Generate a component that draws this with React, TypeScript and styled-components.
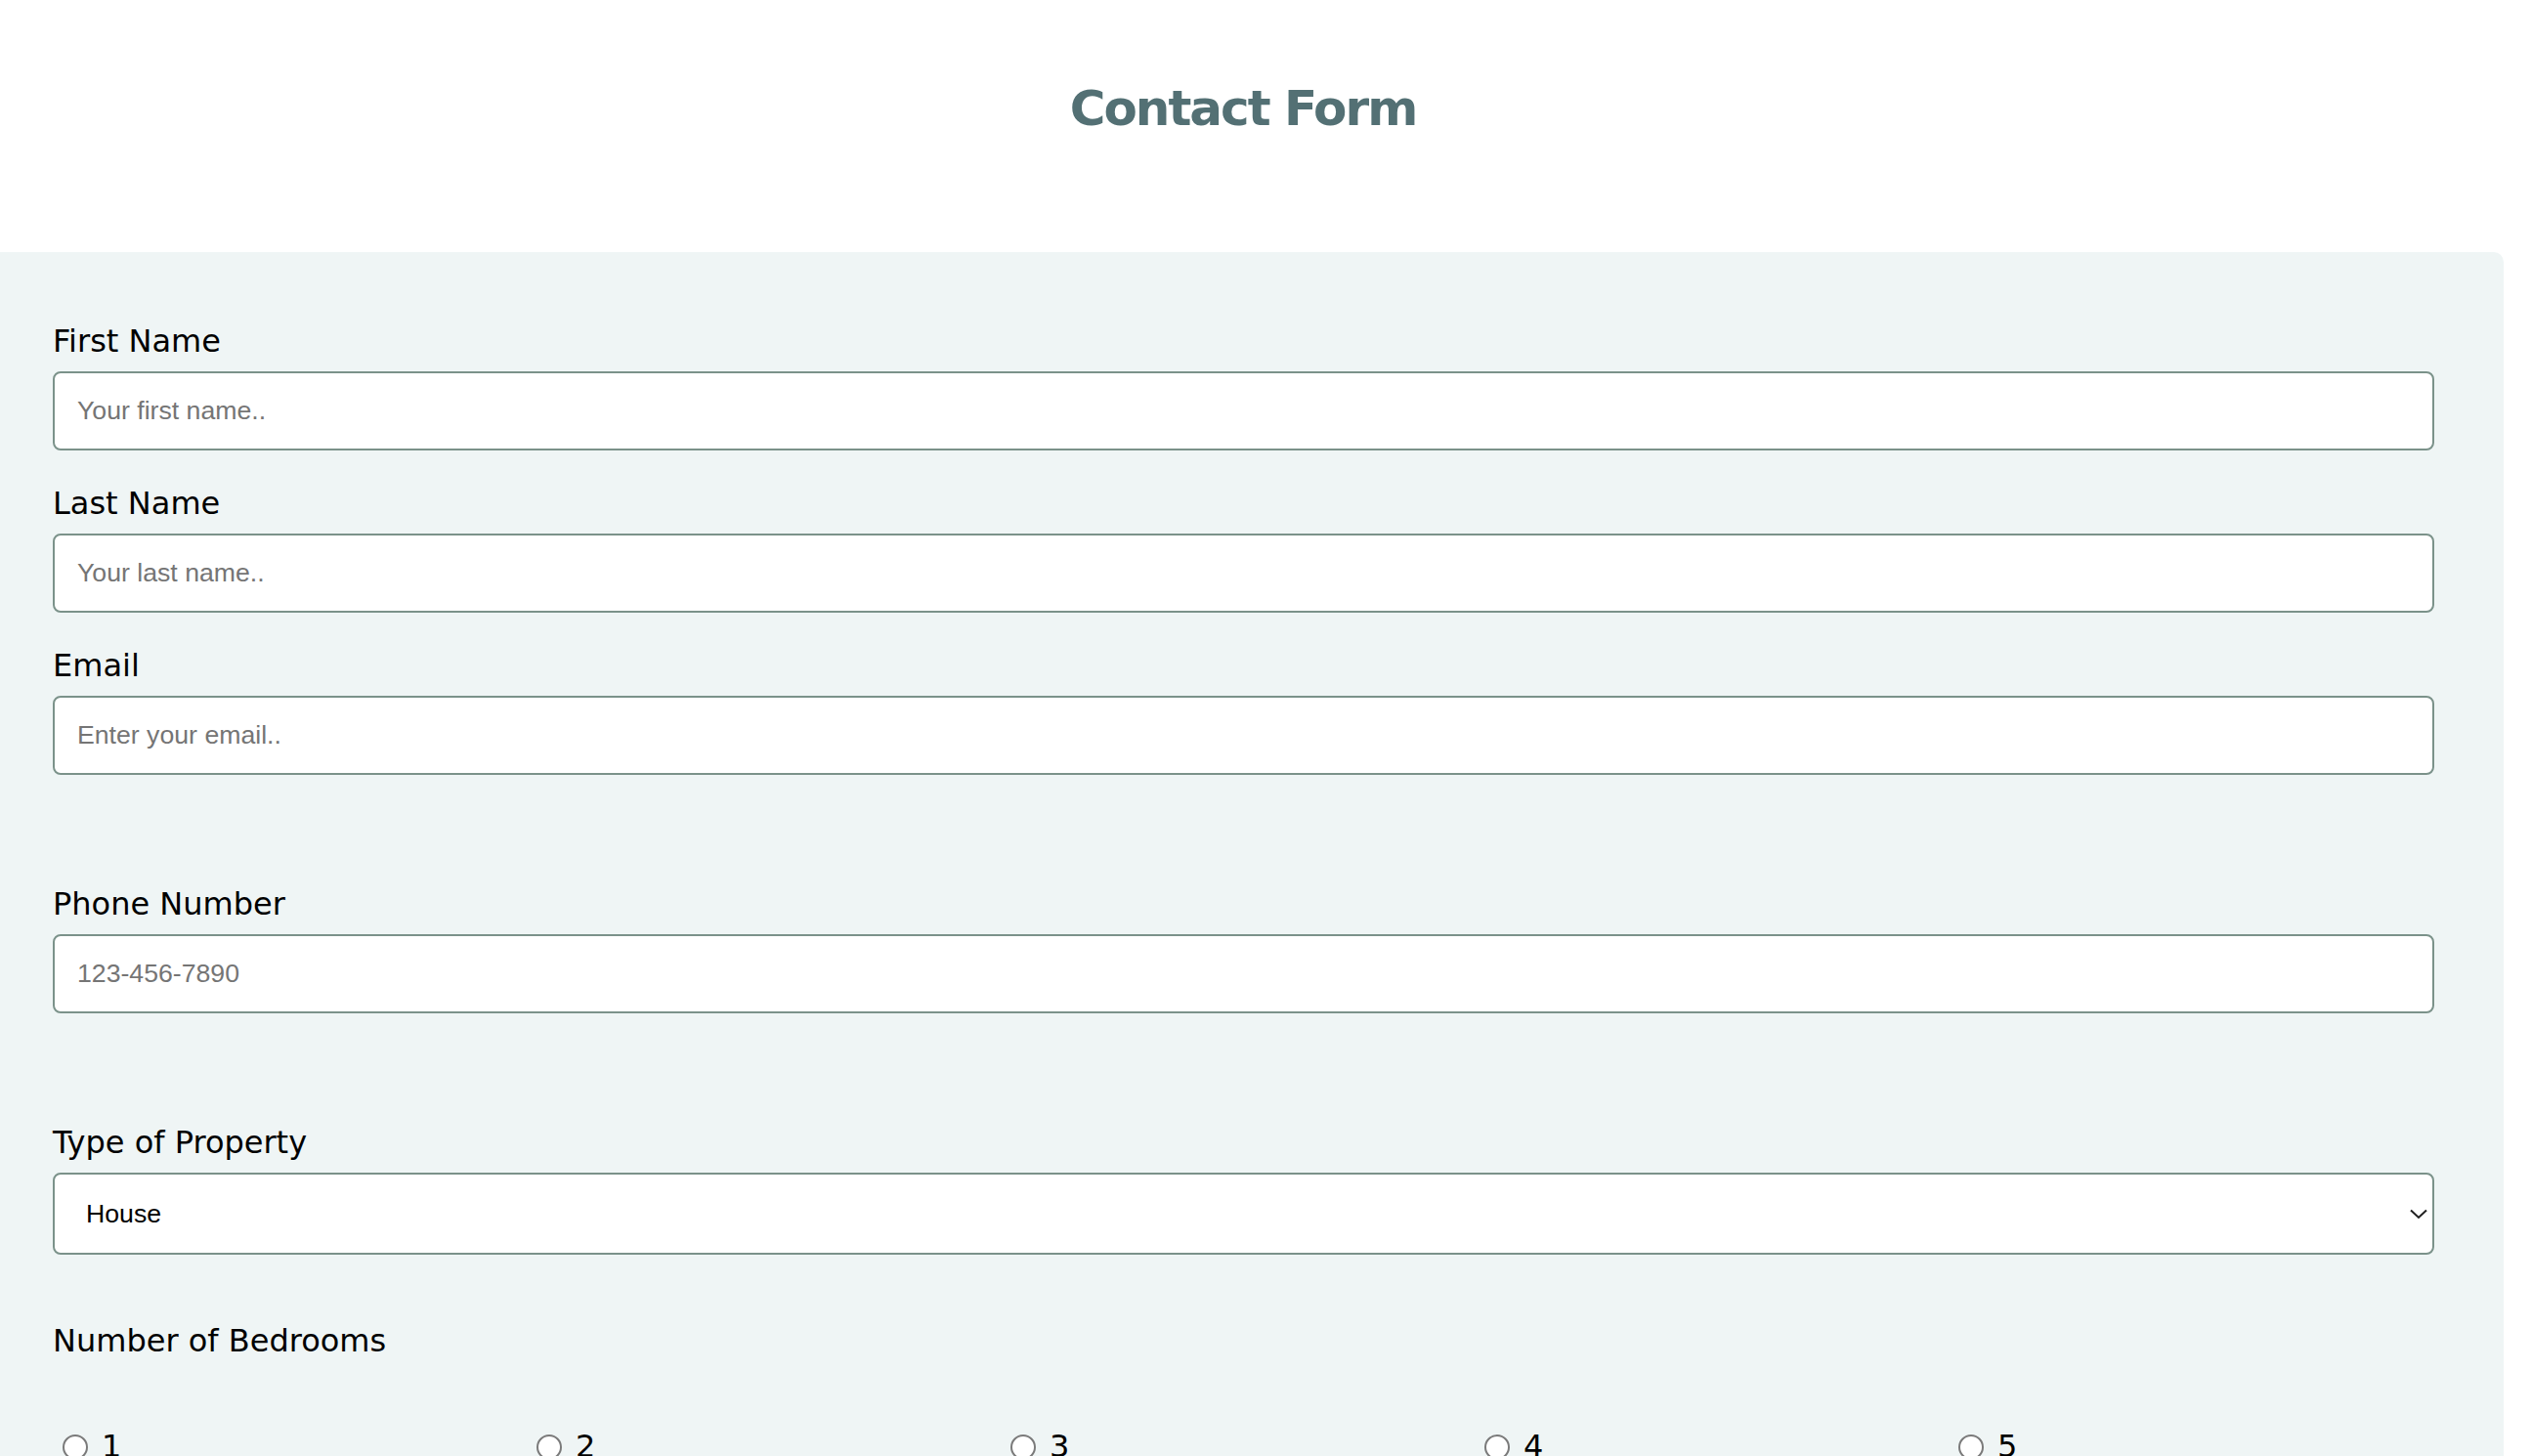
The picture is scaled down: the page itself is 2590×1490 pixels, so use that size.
import React, { useState } from "react";
import styled, { createGlobalStyle } from "styled-components";

const GlobalStyle = createGlobalStyle`
  html, body {
    margin: 0;
    padding: 0;
    background: #ffffff;
  }
  body {
    font-family: "DejaVu Sans", Verdana, sans-serif;
    color: #000;
  }
  * {
    box-sizing: border-box;
  }
`;

const bedrooms = ["1", "2", "3", "4", "5"];

export default function App() {
  const [property, setProperty] = useState("house");
  const [rooms, setRooms] = useState("");

  return (
    <>
      <GlobalStyle />
      <Page>
        <Header>
          <Title>Contact Form</Title>
        </Header>
        <Panel>
          <Field>
            <Label htmlFor="fname">First Name</Label>
            <Input id="fname" type="text" placeholder="Your first name.." />
          </Field>
          <Field>
            <Label htmlFor="lname">Last Name</Label>
            <Input id="lname" type="text" placeholder="Your last name.." />
          </Field>
          <Field>
            <Label htmlFor="email">Email</Label>
            <Input id="email" type="email" placeholder="Enter your email.." />
          </Field>

          <Field spaced>
            <Label htmlFor="phone">Phone Number</Label>
            <Input id="phone" type="tel" placeholder="123-456-7890" />
          </Field>

          <Field spaced>
            <Label htmlFor="property">Type of Property</Label>
            <SelectWrap>
              <Select
                id="property"
                value={property}
                onChange={(e) => setProperty(e.target.value)}
              >
                <option value="house">House</option>
                <option value="apartment">Apartment</option>
                <option value="condo">Condo</option>
                <option value="townhouse">Townhouse</option>
              </Select>
              <Chevron width="18" height="11" viewBox="0 0 18 11">
                <path d="M1 1.5 L9 9 L17 1.5" fill="none" stroke="#1f1f1f" strokeWidth="2" />
              </Chevron>
            </SelectWrap>
          </Field>

          <Group>
            <Label as="div">Number of Bedrooms</Label>
            <RadioRow>
              {bedrooms.map((b) => (
                <RadioLabel key={b}>
                  <Radio
                    type="radio"
                    name="bedrooms"
                    value={b}
                    checked={rooms === b}
                    onChange={() => setRooms(b)}
                  />
                  {b}
                </RadioLabel>
              ))}
            </RadioRow>
          </Group>
        </Panel>
      </Page>
    </>
  );
}

const Page = styled.div`
  width: 2562px;
`;

const Header = styled.header`
  padding: 82px 18px 0 0;
  height: 258px;
  text-align: center;
`;

const Title = styled.h1`
  margin: 0;
  font-family: "DejaVu Sans", Verdana, sans-serif;
  font-size: 50px;
  letter-spacing: -2px;
  font-weight: bold;
  color: #537074;
`;

const Panel = styled.div`
  background: #eff5f5;
  border-top-right-radius: 10px;
  border-bottom-right-radius: 10px;
  padding: 73px 71px 120px 54px;
`;

const Field = styled.div<{ spaced?: boolean }>`
  display: flex;
  flex-direction: column;
  gap: 12px;
  margin-top: ${(p) => (p.spaced ? "114px" : "36px")};

  &:first-child {
    margin-top: 0;
  }
`;

const Label = styled.label`
  font-family: "DejaVu Sans", Verdana, sans-serif;
  font-size: 32px;
  line-height: 37px;
  color: #000;
`;

const Input = styled.input`
  width: 100%;
  height: 81px;
  padding: 0 23px;
  border: 2px solid #7b928a;
  border-radius: 8px;
  background: #fff;
  font-family: "Liberation Sans", Arial, sans-serif;
  font-size: 26.67px;
  color: #000;
  outline: none;

  &::placeholder {
    color: #757575;
  }
`;

const SelectWrap = styled.div`
  position: relative;
`;

const Select = styled.select`
  width: 100%;
  height: 84px;
  padding: 0 32px;
  border: 2px solid #7b928a;
  border-radius: 8px;
  background: #fff;
  font-family: "Liberation Sans", Arial, sans-serif;
  font-size: 26.67px;
  color: #000;
  appearance: none;
  outline: none;
`;

const Chevron = styled.svg`
  position: absolute;
  right: 7px;
  top: 37px;
  pointer-events: none;
`;

const Group = styled.div`
  margin-top: 70px;
  display: flex;
  flex-direction: column;
  gap: 71px;
`;

const RadioRow = styled.div`
  display: grid;
  grid-template-columns: repeat(5, 485px);
`;

const RadioLabel = styled.label`
  display: flex;
  align-items: center;
  gap: 14px;
  padding-left: 10px;
  font-family: "DejaVu Sans", Verdana, sans-serif;
  font-size: 32px;
  line-height: 37px;
`;

const Radio = styled.input`
  appearance: none;
  margin: 0;
  width: 26px;
  height: 26px;
  border: 2px solid #7a7a7a;
  border-radius: 50%;
  background: #fff;

  &:checked {
    border-color: #537074;
    box-shadow: inset 0 0 0 5px #fff;
    background: #537074;
  }
`;
